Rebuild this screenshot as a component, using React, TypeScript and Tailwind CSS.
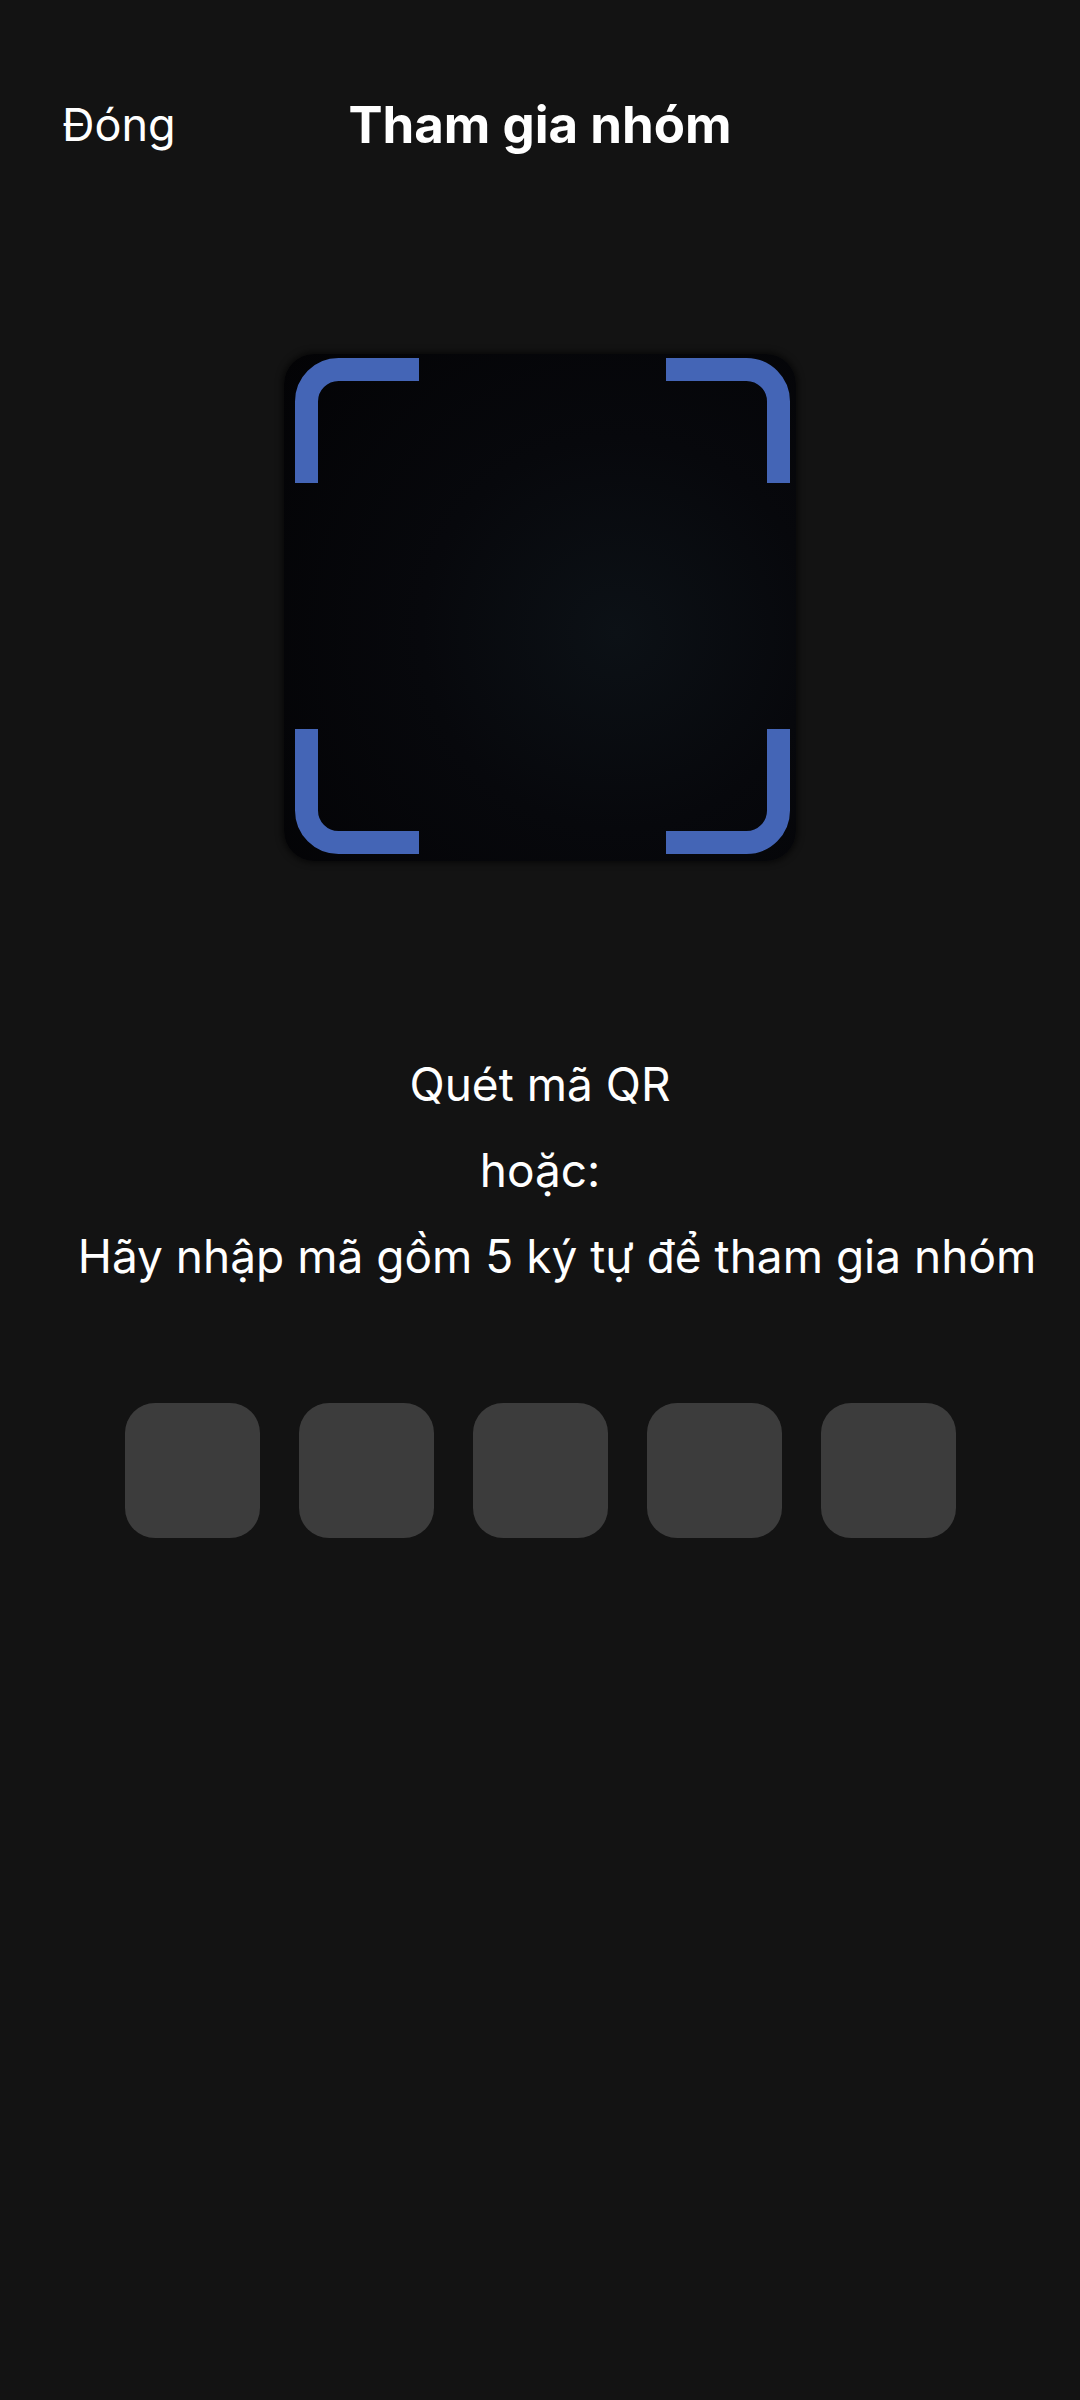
const font = { fontFamily: "Inter, 'Noto Sans', sans-serif" }

function ScanFrame() {
  return (
    <div className="relative h-[507px] w-[512px] overflow-hidden rounded-[30px] bg-[radial-gradient(circle_at_65%_55%,#0c1116_0%,#07080c_45%,#030305_100%)] shadow-[0_0_6px_2px_rgba(0,0,0,0.6)]">
      <svg
        className="absolute inset-0"
        width="512"
        height="507"
        viewBox="0 0 512 507"
        fill="none"
        stroke="#4465b6"
        strokeWidth="23"
      >
        <path d="M22.5 129V47.5A32 32 0 0 1 54.5 15.5H135" />
        <path d="M382 15.5H462.5A32 32 0 0 1 494.5 47.5V129" />
        <path d="M22.5 375V456.5A32 32 0 0 0 54.5 488.5H135" />
        <path d="M382 488.5H462.5A32 32 0 0 0 494.5 456.5V375" />
      </svg>
    </div>
  )
}

export default function App() {
  const slots = [0, 1, 2, 3, 4]

  return (
    <div className="min-h-[2400px] w-full bg-[#131313] text-white" style={font}>
      <div className="relative flex h-[248px] items-center justify-center">
        <button className="absolute left-[62px] text-[45px] leading-none">Đóng</button>
        <h1 className="text-[51px] font-bold leading-none">Tham gia nhóm</h1>
      </div>

      <div className="mt-[106px] flex justify-center">
        <ScanFrame />
      </div>

      <div className="mt-[180px] flex flex-col items-center text-[46px] leading-[86px]">
        <p>Quét mã QR</p>
        <p>hoặc:</p>
        <p className="pl-[34px]">Hãy nhập mã gồm 5 ký tự để tham gia nhóm</p>
      </div>

      <div className="mt-[104px] flex justify-center gap-[39px]">
        {slots.map((i) => (
          <input
            key={i}
            maxLength={1}
            className="h-[135px] w-[135px] rounded-[30px] bg-[#3c3c3c] text-center text-[48px] text-white outline-none"
          />
        ))}
      </div>
    </div>
  )
}
